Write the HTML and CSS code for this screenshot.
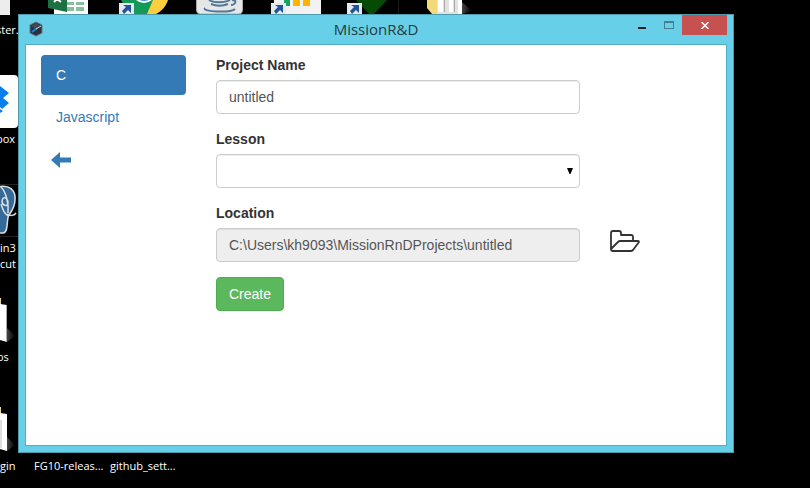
FILE: index.html
```html
<!DOCTYPE html>
<html lang="en">
<head>
<meta charset="utf-8">
<title>MissionR&amp;D</title>
<link rel="stylesheet" href="styles.css">
</head>
<body>
<div class="desktop">
  <svg width="0" height="0" aria-hidden="true"><defs><linearGradient id="shade"><stop offset="0" stop-color="#444"/><stop offset="1" stop-color="#000"/></linearGradient></defs></svg>
  <div class="shortcut at-disc"><svg width="10" height="15" viewBox="0 0 10 15"><path fill="#ededed" d="M0 0h10v15H0z"/></svg></div>
  <span class="caption at-ster">ster.</span>

  <div class="shortcut at-excel"><svg width="40" height="14" viewBox="0 0 40 14"><path fill="#fff" d="M6 0h34v14H6z"/><path fill="#87bf9c" d="M19 2h7v9h-7zM28 2h8v9h-8z"/><path fill="#fff" d="M19 5h17v2H19z"/><path fill="#1d7044" d="M0 0h19v12L0 8z"/><path fill="none" stroke="#fff" stroke-width="2" d="M6 2l3-3 4 3"/></svg></div>

  <div class="shortcut at-chrome"><svg width="50" height="14" viewBox="0 0 50 14"><path fill="#159957" d="M2 0h34L31 14H10z"/><path fill="#ffce3f" d="M34 0h15c-2 6-6 11-12 14H28z"/><circle cx="25" cy="-9" r="12" fill="#fff"/><circle cx="25" cy="-9" r="10" fill="#4788ee"/><path fill="#e5eaee" d="M0 3h15v11H0z"/><path fill="#22539b" d="M4 5h8v8L9 10l-4 4-2-3 4-4z"/></svg></div>

  <div class="shortcut at-java"><svg width="48" height="14" viewBox="0 0 48 14"><path fill="#e4e6e8" stroke="#aaa" d="M.5 -2h46v12q0 4-4 4h-38q-4 0-4-4z"/><g fill="none" stroke="#557796" stroke-width="2"><path d="M13 0c4 3 16 3 21 0M15 4c5 2 12 2 17 0M9 8c-4 4 26 5 30 1M36 0c6 0 3 5-1 5"/></g></svg></div>

  <div class="shortcut at-chart"><svg width="50" height="14" viewBox="0 0 50 14"><path fill="#f2f2f2" d="M3 0h47v14H3z"/><path fill="#12a460" d="M13 0h6v6h-6z"/><path fill="#ffb400" d="M22 0h7v6h-7zM32 0h7v6h-7z"/><path fill="#e5eaee" d="M0 3h15v11H0z"/><path fill="#22539b" d="M4 5h8v8L9 10l-4 4-2-3 4-4z"/></svg></div>

  <div class="shortcut at-gem"><svg width="52" height="14" viewBox="0 0 52 14"><path fill="#064b05" d="M9 0h31L27 14H22z"/><path fill="#e5eaee" d="M0 3h15v11H0z"/><path fill="#22539b" d="M4 5h8v8L9 10l-4 4-2-3 4-4z"/><path fill="#1c1c1c" d="M51 0h1v14h-1z"/></svg></div>

  <div class="shortcut at-files"><svg width="46" height="14" viewBox="0 0 46 14"><path fill="url(#shade)" d="M35 2l10 9-10 3z"/><path fill="#f4d978" d="M0 0h11v14H5L0 8z"/><path fill="#e2e2e2" d="M10 0h25v14H10z"/><path fill="#fff" d="M11 0h5v12h-5zM22 0h4v12h-4zM31 0h4v14h-4z"/><path fill="#aaa" d="M17 0h1v12h-1zM27 0h1v12h-1z"/></svg></div>

  <div class="shortcut at-box"><svg width="18" height="54" viewBox="0 0 18 54"><path fill="#fff" d="M0 0h14q4 0 4 4v45q0 4-4 4H0z"/><path fill="#087eea" d="M0 11l9 7-6 5 6 5-7 6-2-2zM0 34l3 2-3 2z"/></svg></div>
  <span class="caption at-box-name">box</span>

  <div class="shortcut at-elephant"><svg width="18" height="54" viewBox="0 0 18 54"><path stroke="#222" d="M0 .5h18M0 52.500h18"/><path fill="#35699a" stroke="#ddd" stroke-width="1.500" d="M-2 3C9 0 16 6 15 16c0 7-4 12-6 15-3 4 0 18-6 18h-5z"/><path fill="none" stroke="#ddd" stroke-width="1.500" d="M1 3c5 5 8 17 7 26M2 17c1-6 6-3 6 2 0 4-6 3-6-2M7 30c3 2 7 2 9-1M1 20c2 6 3 9 7 12"/></svg></div>
  <span class="caption at-elephant-name">in3<br>cut</span>

  <div class="shortcut at-page"><svg width="16" height="46" viewBox="0 0 16 46"><path fill="url(#shade)" d="M7 30l8 8-8 6z"/><path fill="#e8d492" d="M0 0h1v8H0z"/><path fill="#fff" d="M0 6l7 1v37l-7-2z"/><path fill="#aaa" d="M6 7h1v37H6z"/></svg></div>
  <span class="caption at-page-name">os</span>

  <div class="shortcut at-plugin"><svg width="16" height="46" viewBox="0 0 16 46"><path fill="url(#shade)" d="M7 30l8 8-8 6z"/><path fill="#e8d492" d="M0 0h1v8H0z"/><path fill="#fff" d="M0 6l7 1v37l-7-2z"/><path fill="#ddd" d="M0 13h2v28H0z"/></svg></div>
  <span class="caption at-plugin-name">gin</span>

  <span class="caption at-release">FG10-releas...</span>
  <span class="caption at-settings">github_sett...</span>

  <main class="window">
    <header class="titlebar">
      <svg class="app-icon" width="16" height="16" viewBox="0 0 16 16"><path fill="#28313c" stroke="#66727c" d="M8 1l6 3v8l-6 3-6-3V4z"/><path fill="#414b58" d="M8 2l5 3-5 3-5-3z"/><path stroke="#1685dc" stroke-width="2" d="M4 11l5-4"/><path stroke="#b8d8e8" d="M8 8l5-3"/></svg>
      <h1 class="title">MissionR&amp;D</h1>
      <div class="window-controls">
        <button class="control minimize" aria-label="Minimize"><svg width="8" height="2"><path fill="#222" d="M0 0h8v2H0z"/></svg></button>
        <button class="control maximize" aria-label="Maximize"><svg width="10" height="8" viewBox="0 0 10 8"><path fill="#467f8d" fill-rule="evenodd" d="M0 0h10v8H0zM1 2v5h8V2z"/></svg></button>
        <button class="control close" aria-label="Close"><svg width="8" height="7" viewBox="0 0 8 7"><path stroke="#fff" stroke-width="1.500" d="M.5 0l7 7M7.500 0l-7 7"/></svg></button>
      </div>
    </header>
    <div class="content">
      <nav class="languages">
        <a class="language active" href="#c">C</a>
        <a class="language" href="#javascript">Javascript</a>
        <a class="back" href="#back" aria-label="Back"><svg width="20" height="16" viewBox="0 0 20 16"><path fill="#337ab7" d="M0 8l9-8v5.500h11v5H9V16z"/></svg></a>
      </nav>
      <form class="project">
        <div class="field">
          <label for="name">Project Name</label>
          <input class="text-control" id="name" type="text" value="untitled">
        </div>
        <div class="field">
          <label for="lesson">Lesson</label>
          <div class="select-wrap">
            <select class="text-control" id="lesson"><option></option></select>
            <svg class="caret" width="6" height="6" viewBox="0 0 6 6"><path d="M0 0h6L3.500 6h-1z"/></svg>
          </div>
        </div>
        <div class="field">
          <label for="location">Location</label>
          <input class="text-control" id="location" type="text" value="C:\Users\kh9093\MissionRnDProjects\untitled" readonly>
        </div>
        <button class="browse" type="button" aria-label="Browse"><svg width="30" height="22" viewBox="0 0 30 22"><path fill="none" stroke="#333" stroke-width="1.800" stroke-linejoin="round" d="M1 19V3q0-2 2-2h6q2 0 2 2v2h10q2 0 2 2v4M1 19q0 2 2 2h18q1 0 2-1l6-8q0-1-1-1H10q-1 0-2 1z"/></svg></button>
        <button class="create" type="button">Create</button>
      </form>
    </div>
  </main>
</div>
</body>
</html>
```
FILE: styles.css
```css
* { box-sizing: border-box; }
body {
  margin: 0;
  background: #000;
  color: #333;
  font: 14px/20px "Liberation Sans", Arial, sans-serif;
}
svg { display: block; }
button { padding: 0; border: 0; background: none; font: inherit; }

/* Desktop: a free canvas of shortcuts with the window on top */
.desktop { position: relative; height: 100vh; min-height: 400px; overflow: hidden; }
.shortcut, .caption { position: absolute; }
.caption {
  left: 0;
  color: #fff;
  font: 11px/16px "Open Sans", "Noto Sans", sans-serif;
  white-space: nowrap;
}
.at-disc { left: 0; top: 0; }
.at-ster { left: -4px; top: 22px; }
.at-excel { left: 48px; top: 0; }
.at-chrome { left: 119px; top: 0; }
.at-java { left: 196px; top: 0; }
.at-chart { left: 271px; top: 0; }
.at-gem { left: 347px; top: 0; }
.at-files { left: 427px; top: 0; }
.at-box { left: 0; top: 75px; }
.at-box-name { left: -4px; top: 131px; }
.at-elephant { left: 0; top: 184px; }
.at-elephant-name { top: 240px; }
.at-page { left: 0; top: 298px; }
.at-page-name { left: -3px; top: 349px; }
.at-plugin { left: 0; top: 407px; }
.at-plugin-name { top: 458px; }
.at-release { left: 34px; top: 458px; }
.at-settings { left: 110px; top: 458px; }

.window {
  position: absolute;
  inset: 14px 76px 35px 18px;
  display: flex;
  flex-direction: column;
  padding: 0 6px 6px;
  border: 1px solid #4b9bad;
  background: #67d0e8;
}
.titlebar {
  display: grid;
  grid-template-columns: 100px 1fr 100px;
  height: 29px;
  flex: none;
}
.app-icon { margin: 6px 0 0 3px; }
.title {
  margin: 0;
  color: #263b41;
  font: 15px/29px "Open Sans", "Noto Sans", sans-serif;
  text-align: center;
}
.window-controls { display: flex; justify-content: flex-end; align-items: flex-start; }
.control { display: flex; width: 27px; height: 20px; align-items: center; justify-content: center; flex: none; }
.minimize { padding-top: 6px; }
.close { width: 45px; background: #c75050; }

.content {
  flex: 1;
  display: grid;
  grid-template-columns: 1fr 3fr;
  align-items: start;
  padding-top: 10px;
  border: 1px solid #53adc1;
  background: #fff;
}
.languages { display: flex; flex-direction: column; gap: 2px; padding: 0 15px; }
.language { padding: 10px 15px; border-radius: 4px; color: #337ab7; text-decoration: none; }
.language.active { background: #337ab7; color: #fff; }
.back { align-self: flex-start; padding: 13px 10px; }
.project {
  display: grid;
  grid-template-columns: 3fr 1fr;
  row-gap: 15px;
  align-items: end;
}
.field { grid-column: 1; padding: 0 15px; }
.field label { display: block; margin-bottom: 5px; font-weight: 700; }
.text-control {
  display: block;
  width: 100%;
  height: 34px;
  padding: 6px 12px;
  border: 1px solid #ccc;
  border-radius: 4px;
  background: #fff;
  box-shadow: inset 0 1px 1px rgba(0, 0, 0, .075);
  color: #555;
  font: inherit;
  appearance: none;
}
.text-control:read-only:not(select) { background: #eee; }
.select-wrap { position: relative; }
.caret { position: absolute; right: 7px; top: 14px; pointer-events: none; }
.browse { grid-column: 2; justify-self: start; padding: 0 15px 10px; }
.create {
  grid-column: 1;
  justify-self: start;
  height: 34px;
  margin: 0 15px;
  padding: 0 12px;
  border: 1px solid #4cae4c;
  border-radius: 4px;
  background: #5cb85c;
  color: #fff;
}
```
